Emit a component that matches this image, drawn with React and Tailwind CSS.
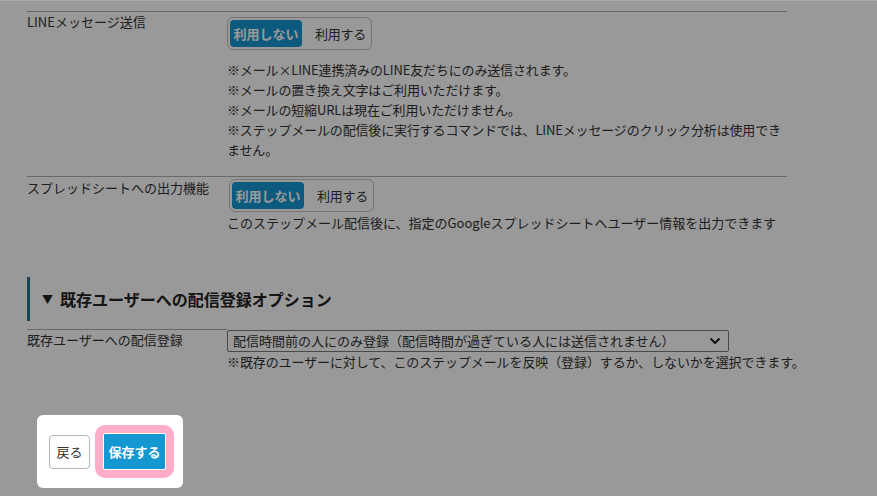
import React from "react";

const Toggle = ({ className = "" }) => (
  <div className={`inline-flex h-[33px] rounded-[6px] border border-[#c4c4c4] bg-white p-[2px] ${className}`}>
    <button className="h-[27px] w-[72px] rounded-[4px] bg-[#1597d2] text-[13px] font-bold text-white">
      利用しない
    </button>
    <button className="h-[27px] w-[67px] pl-[10px] text-[13px] tracking-[-0.3px] text-[#333]">利用する</button>
  </div>
);

export default function App() {
  return (
    <div className="relative min-h-[496px] overflow-hidden bg-white font-['Noto_Sans_CJK_JP',sans-serif] text-[13px] text-[#333]">
      <div className="absolute inset-x-0 top-0 z-30 h-px bg-[#a9a9a9]" />

      <div className="w-[787px] pl-[27px] pt-[11px]">
        {/* LINE */}
        <div className="flex border-t border-[#b0b0b0]">
          <div className="w-[200px] shrink-0 leading-5">LINEメッセージ送信</div>
          <div className="min-w-0 flex-1 pb-4 pt-[5px]">
            <Toggle />
            <div className="mt-[10px] leading-5 tracking-[-0.15px]">
              <p>※メール×LINE連携済みのLINE友だちにのみ送信されます。</p>
              <p>※メールの置き換え文字はご利用いただけます。</p>
              <p>※メールの短縮URLは現在ご利用いただけません。</p>
              <p>※ステップメールの配信後に実行するコマンドでは、LINEメッセージのクリック分析は使用できません。</p>
            </div>
          </div>
        </div>

        {/* Spreadsheet */}
        <div className="flex border-t border-[#b0b0b0]">
          <div className="w-[200px] shrink-0 pt-px leading-5">スプレッドシートへの出力機能</div>
          <div className="min-w-0 flex-1 pt-[2px]">
            <Toggle className="ml-[2px]" />
            <p className="mt-[1px] leading-5">
              このステップメール配信後に、指定のGoogleスプレッドシートへユーザー情報を出力できます
            </p>
          </div>
        </div>

        {/* heading */}
        <div className="mt-[44px] flex h-[44px] items-center gap-[7px] border-l-[3px] border-[#2f7488] pl-[12px] text-[16px] font-bold text-[#222]">
          <span className="text-[11px]">▼</span>
          <span>既存ユーザーへの配信登録オプション</span>
        </div>

        <div className="mt-[8px] flex">
          <div className="w-[200px] shrink-0 border-t border-[#b0b0b0] leading-5">既存ユーザーへの配信登録</div>
          <div className="min-w-0 flex-1 pt-px">
            <div className="flex h-[22px] w-[502px] items-center justify-between rounded-[2px] border border-[#7a7a7a] bg-white pl-[5px] pr-[7px] leading-5">
              <span>配信時間前の人にのみ登録（配信時間が過ぎている人には送信されません）</span>
              <svg width="12" height="8" viewBox="0 0 12 8" fill="none">
                <path d="M1.5 1.5 6 6l4.5-4.5" stroke="#222" strokeWidth="2.2" />
              </svg>
            </div>
            <p className="whitespace-nowrap leading-5 tracking-[-0.1px]">
              ※既存のユーザーに対して、このステップメールを反映（登録）するか、しないかを選択できます。
            </p>
          </div>
        </div>
      </div>

      <div className="absolute inset-0 bg-black/40" />

      <div className="relative z-10 ml-[37px] mt-[43px] inline-flex items-center gap-[5px] rounded-[6px] bg-white py-[10px] pl-[12px] pr-[9px]">
        <button className="h-[34px] w-[41px] rounded-[4px] border border-[#b5b5b5] bg-white text-[13px] text-[#333]">
          戻る
        </button>
        <div className="rounded-[10px] bg-[#ffadc8] p-[8px]">
          <button className="h-[37px] w-[63px] rounded-[2px] border border-white bg-[#1597d2] text-[13px] font-bold text-white">
            保存する
          </button>
        </div>
      </div>
    </div>
  );
}
